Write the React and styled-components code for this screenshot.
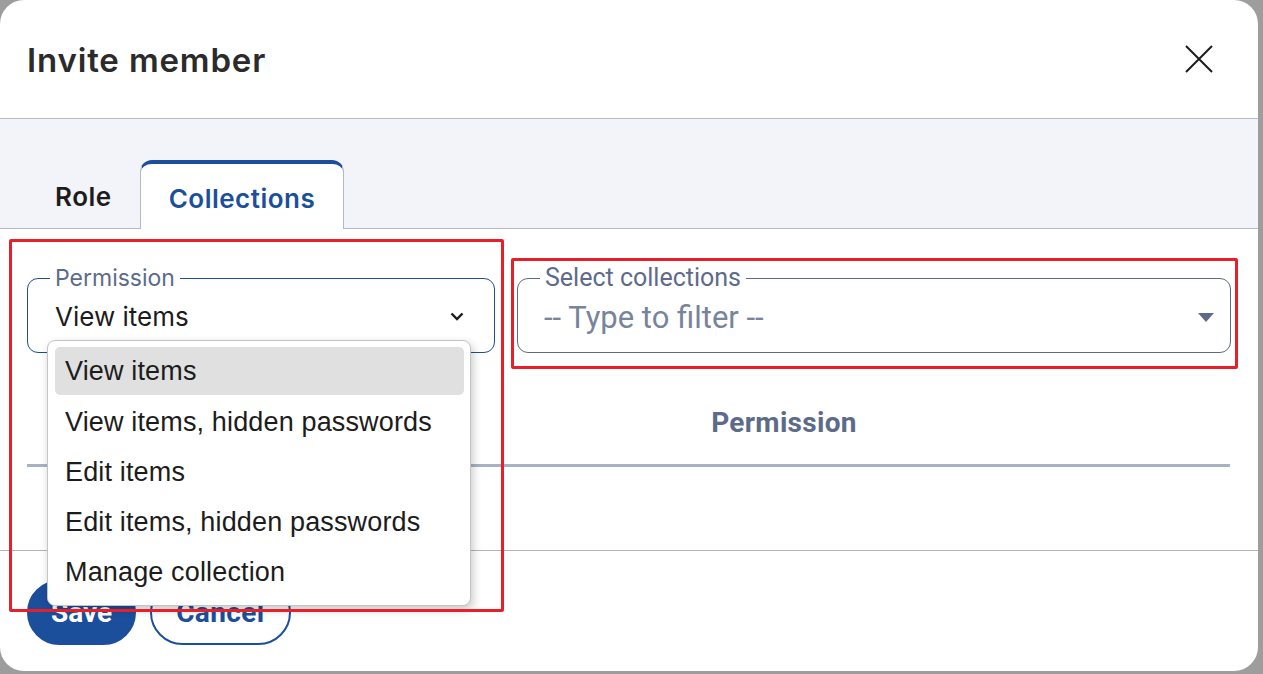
import React from "react";
import styled, { createGlobalStyle } from "styled-components";

const Global = createGlobalStyle`
  html, body { margin: 0; padding: 0; }
  body {
    background: #9d9d9d;
    width: 1263px;
    height: 674px;
    overflow: hidden;
    font-family: "Inter", "Noto Sans", sans-serif;
  }
`;

const Dialog = styled.div`
  position: relative;
  width: 1258px;
  height: 671px;
  background: #ffffff;
  border-radius: 24px;
  overflow: hidden;
  display: flex;
  flex-direction: column;
`;

const Header = styled.header`
  height: 118px;
  display: flex;
  align-items: center;
  justify-content: space-between;
  padding: 0 44px 0 27px;
  border-bottom: 1px solid #b3b8ca;
  box-sizing: content-box;
`;

const Title = styled.h1`
  margin: 0;
  font-size: 33px;
  font-weight: 600;
  color: #2b2b2b;
  letter-spacing: 0.85px;
  padding-top: 2px;
`;

const CloseButton = styled.button`
  border: none;
  background: none;
  padding: 0;
  width: 30px;
  height: 30px;
  display: flex;
  align-items: center;
  justify-content: center;
  cursor: pointer;
`;

const TabStrip = styled.div`
  background: #f3f4f9;
  height: 109px;
  display: flex;
  align-items: flex-end;
  padding: 0 27px;
  border-bottom: 1px solid #b3b8ca;
  box-sizing: content-box;
`;

const Tab = styled.div`
  height: ${(p) => (p.$active ? "62px" : "64px")};
  padding: 0 ${(p) => (p.$active ? "28px" : "27px")};
  padding-top: ${(p) => (p.$active ? "3px" : "6px")};
  display: flex;
  align-items: center;
  font-size: 26px;
  font-weight: 600;
  letter-spacing: 0.5px;
  margin-bottom: ${(p) => (p.$active ? "-1px" : "0")};
  color: ${(p) => (p.$active ? "#1b4f9c" : "#1c1c1c")};
  background: ${(p) => (p.$active ? "#ffffff" : "transparent")};
  border-top: ${(p) => (p.$active ? "4px solid #1b4f9c" : "4px solid transparent")};
  border-left: 1px solid ${(p) => (p.$active ? "#b3b8ca" : "transparent")};
  border-right: 1px solid ${(p) => (p.$active ? "#b3b8ca" : "transparent")};
  border-radius: 12px 12px 0 0;
  box-sizing: content-box;
`;

const Body = styled.div`
  padding: 37px 28px 0 27px;
  height: 284px;
  box-sizing: content-box;
  flex: none;
`;

const FieldRow = styled.div`
  display: grid;
  grid-template-columns: 468px 714px;
  gap: 22px;
`;

const Field = styled.fieldset`
  margin: 0;
  height: 87px;
  box-sizing: border-box;
  border: 1px solid ${(p) => p.$color};
  border-radius: 11px;
  padding: 0 30px 0 22px;
  display: flex;
  align-items: center;
  justify-content: space-between;
  min-width: 0;
`;

const Legend = styled.legend`
  padding: 0 5px;
  font-size: ${(p) => p.$size}px;
  line-height: 24px;
  color: #5d6b8b;
  font-family: ${(p) => p.$font};
`;

const Value = styled.span`
  font-size: 26px;
  color: #1c1c1c;
  margin-top: -10px;
  padding-left: 5px;
`;

const Placeholder = styled.span`
  font-family: "Roboto", sans-serif;
  font-size: 31px;
  color: #78849a;
  margin-top: -8px;
  padding-left: 4px;
`;

const TableHead = styled.div`
  display: grid;
  grid-template-columns: 557px 400px 1fr;
  height: 114px;
  align-items: center;
  border-bottom: 3px solid #a8b2c3;
  box-sizing: border-box;
  padding-top: 28px;
`;

const HeadCell = styled.div`
  font-family: "Roboto", sans-serif;
  font-weight: 700;
  font-size: 28px;
  letter-spacing: 0.3px;
  color: #5d6b8b;
  text-align: center;
`;

const Footer = styled.footer`
  border-top: 1px solid #b5b5b5;
  padding: 29px 27px 0;
  display: flex;
  gap: 14px;
  flex: 1;
`;

const Button = styled.button`
  height: 65px;
  padding: 0 ${(p) => (p.$primary ? "22px" : "24px")};
  border-radius: 33px;
  border: 2px solid #1b4f9c;
  background: ${(p) => (p.$primary ? "#1b4f9c" : "#ffffff")};
  color: ${(p) => (p.$primary ? "#ffffff" : "#1b4f9c")};
  font-family: "Roboto", sans-serif;
  font-size: 28px;
  font-weight: 700;
  letter-spacing: ${(p) => (p.$primary ? "0" : "0.4px")};
`;

const Menu = styled.ul`
  position: absolute;
  left: 47px;
  top: 340px;
  width: 424px;
  margin: 0;
  padding: 6px 6px 8px 7px;
  list-style: none;
  box-sizing: border-box;
  background: #ffffff;
  border: 1px solid #c4c4c4;
  border-radius: 8px;
  box-shadow: 2px 4px 10px rgba(0, 0, 0, 0.22);
`;

const MenuItem = styled.li`
  height: 50px;
  display: flex;
  align-items: center;
  padding-left: 10px;
  font-family: "Liberation Sans", Arial, sans-serif;
  font-size: 27px;
  letter-spacing: 0.15px;
  color: #1c1c1c;
  border-radius: 5px;
  background: ${(p) => (p.$selected ? "#e0e0e0" : "transparent")};
  ${(p) => (p.$selected ? "height: 48px; margin-bottom: 2px;" : "")}
`;

const Highlight = styled.div`
  position: absolute;
  border: 3px solid #e61f28;
  border-radius: 2px;
  box-sizing: border-box;
  left: ${(p) => p.$x}px;
  top: ${(p) => p.$y}px;
  width: ${(p) => p.$w}px;
  height: ${(p) => p.$h}px;
  pointer-events: none;
`;

const options = [
  "View items",
  "View items, hidden passwords",
  "Edit items",
  "Edit items, hidden passwords",
  "Manage collection",
];

export default function App() {
  return (
    <>
      <Global />
      <Dialog>
        <Header>
          <Title>Invite member</Title>
          <CloseButton aria-label="Close">
            <svg width="30" height="30" viewBox="0 0 30 30">
              <path d="M2 2 L28 28 M28 2 L2 28" stroke="#1c1c1c" strokeWidth="2" fill="none" />
            </svg>
          </CloseButton>
        </Header>
        <TabStrip>
          <Tab>Role</Tab>
          <Tab $active>Collections</Tab>
        </TabStrip>
        <Body>
          <FieldRow>
            <Field $color="#1f4f92">
              <Legend $size={23} $font={'"Inter", sans-serif'}>Permission</Legend>
              <Value>View items</Value>
              <svg width="14" height="9" viewBox="0 0 14 9" style={{ marginTop: -10 }}>
                <path d="M1.5 1.5 L7 7 L12.5 1.5" stroke="#1c1c1c" strokeWidth="2.4" fill="none" />
              </svg>
            </Field>
            <Field $color="#5f6b85">
              <Legend $size={25} $font={'"Roboto", sans-serif'}>Select collections</Legend>
              <Placeholder>-- Type to filter --</Placeholder>
              <svg width="16" height="9" viewBox="0 0 16 9" style={{ marginTop: -8, marginRight: -14 }}>
                <path d="M0 0 L16 0 L8 9 Z" fill="#5d6b8b" />
              </svg>
            </Field>
          </FieldRow>
          <TableHead>
            <div />
            <HeadCell>Permission</HeadCell>
            <div />
          </TableHead>
        </Body>
        <Footer>
          <Button $primary>Save</Button>
          <Button>Cancel</Button>
        </Footer>
        <Menu>
          {options.map((o, i) => (
            <MenuItem key={o} $selected={i === 0}>
              {o}
            </MenuItem>
          ))}
        </Menu>
        <Highlight $x={9} $y={239} $w={495} $h={373} />
        <Highlight $x={511} $y={258} $w={727} $h={111} />
      </Dialog>
    </>
  );
}
